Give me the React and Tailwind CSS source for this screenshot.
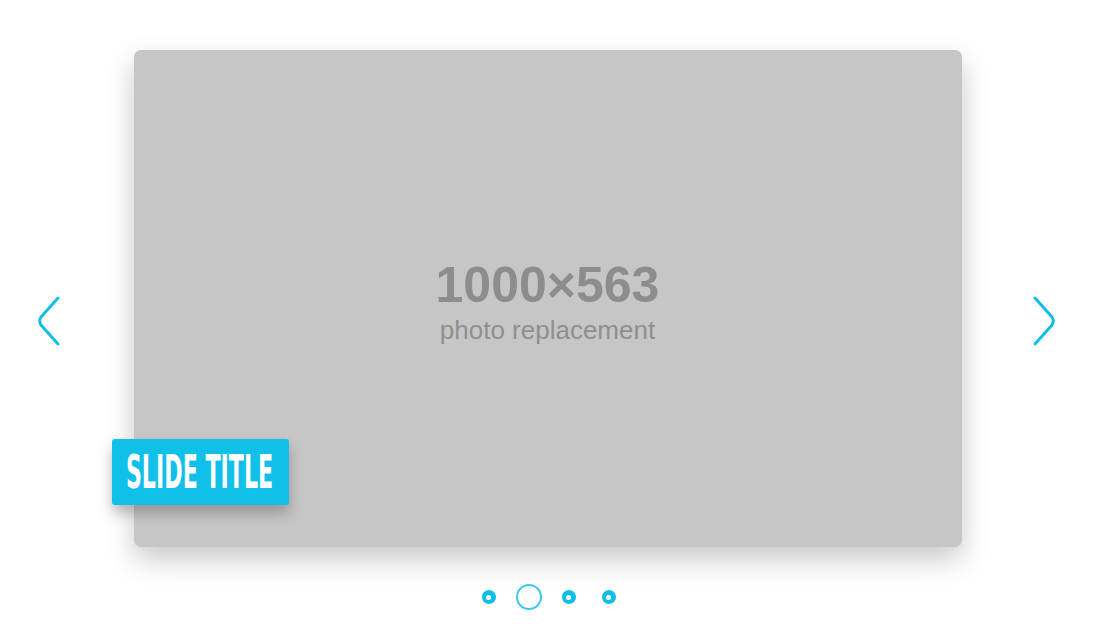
const Chevron = ({ dir }) => (
    <svg width="26" height="52" viewBox="0 0 26 52" fill="none">
        {dir === "left" ? (
            <path d="M22 3 L5 22 Q2.5 26 5 30 L22 49" stroke="#14bde8" strokeWidth="3" strokeLinecap="round" strokeLinejoin="round"/>
        ) : (
            <path d="M4 3 L21 22 Q23.5 26 21 30 L4 49" stroke="#14bde8" strokeWidth="3" strokeLinecap="round" strokeLinejoin="round"/>
        )}
    </svg>
);

const Dot = ({active}) => (
    <div className="w-[40px] flex justify-center">
        {active ? (
            <div className="w-[26px] h-[26px] rounded-full border-2 border-[#3cc8ea]"/>
        ) : (
            <div className="w-[14px] h-[14px] rounded-full bg-[#10bfe8] flex items-center justify-center">
                <div className="w-[5px] h-[5px] rounded-full bg-white"/>
            </div>
        )}
    </div>
);

export default function App() {
    return (
        <div className="w-full h-[630px] bg-white pt-[50px] font-['Liberation_Sans',Arial,sans-serif]">
            <div className="flex justify-center items-start pr-[2px]">
                <div className="w-[100px] mt-[245px] pl-[2px]">
                    <Chevron dir="left"/>
                </div>
                <div className="relative w-[828px] h-[497px] rounded-[7px] bg-[#c6c6c6] shadow-[0_12px_28px_rgba(0,0,0,0.22)] flex flex-col items-center justify-center">
                    <div className="mt-[8px] text-[50px] leading-[50px] font-bold text-[#8d8d8d]">1000×563</div>
                    <div className="mt-[5px] text-[26px] leading-[30px] text-[#8f8f8f]">photo replacement</div>
                    <div className="absolute left-[-22px] top-[389px] w-[177px] h-[66px] rounded-[3px] bg-[#10c0e8] shadow-[0_8px_14px_rgba(0,0,0,0.25)] flex items-center justify-center">
                        <span className="inline-block scale-x-[0.56] scale-y-[1.05] text-white text-[44px] leading-none font-bold whitespace-nowrap font-['Liberation_Sans_Narrow','DejaVu_Sans_Condensed',sans-serif]">
                            SLIDE TITLE
                        </span>
                    </div>
                </div>
                <div className="w-[100px] mt-[245px] pl-[69px]">
                    <Chevron dir="right"/>
                </div>
            </div>
            <div className="mt-[37px] flex justify-center items-center">
                <Dot/>
                <Dot active/>
                <Dot/>
                <Dot/>
            </div>
        </div>
    );
}
